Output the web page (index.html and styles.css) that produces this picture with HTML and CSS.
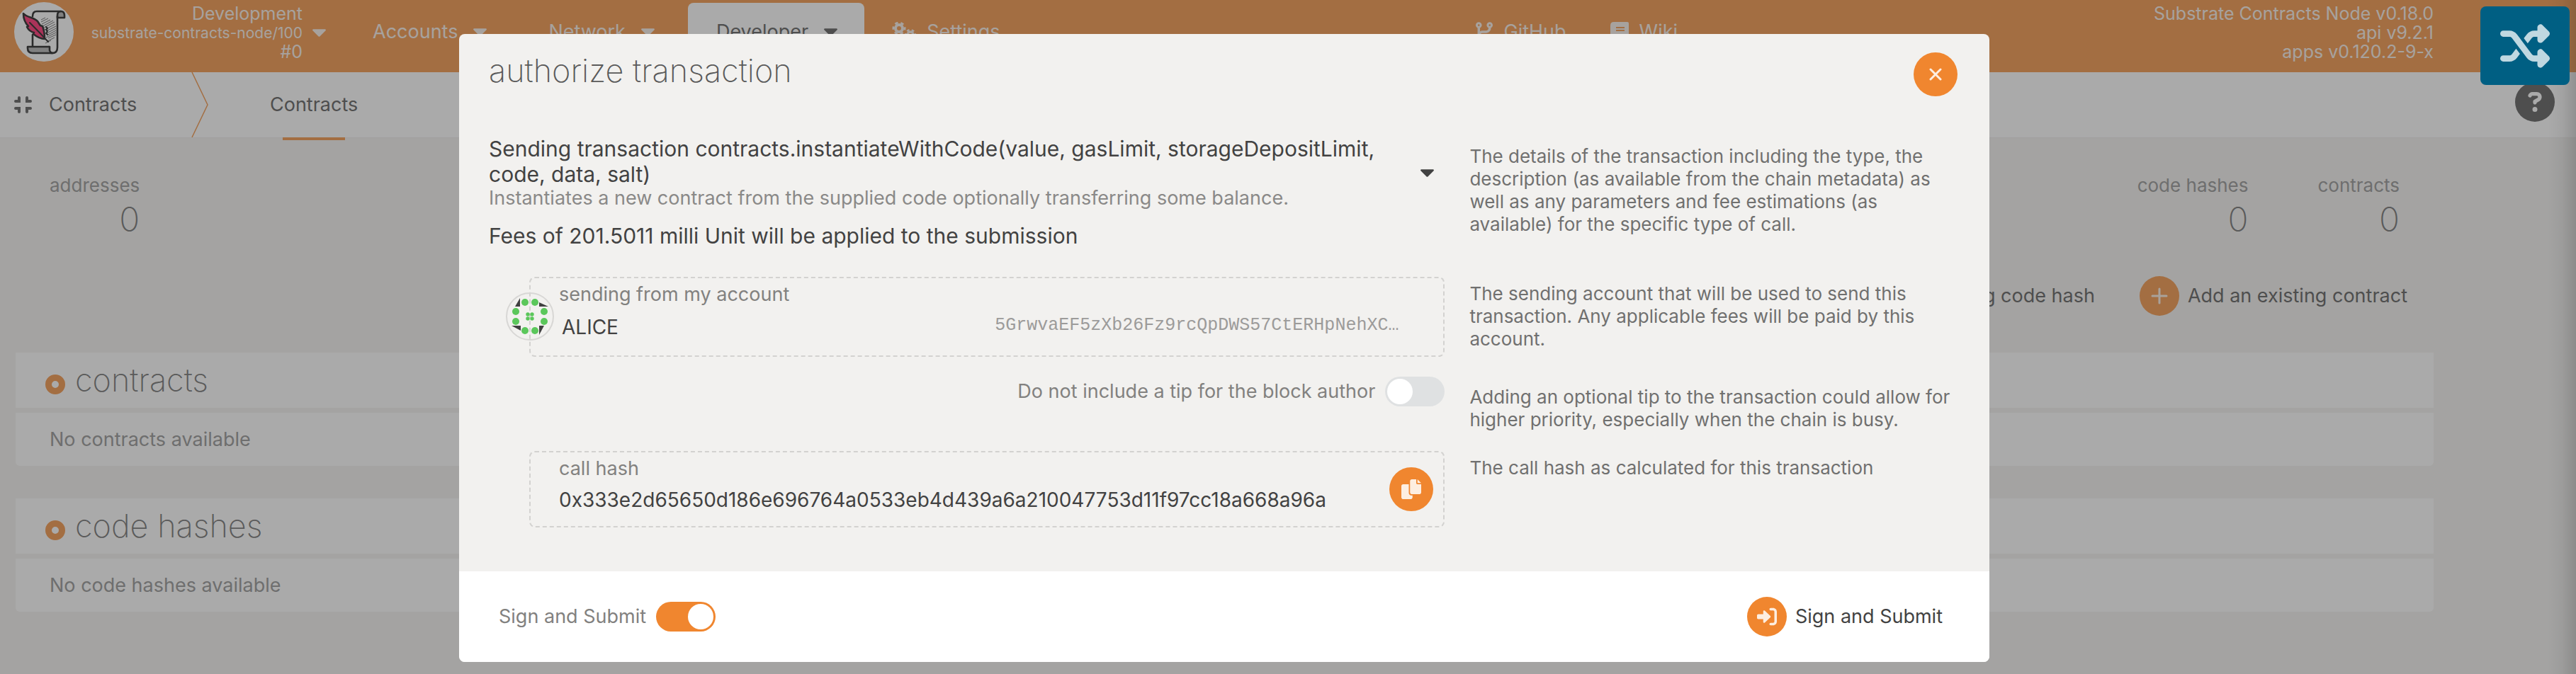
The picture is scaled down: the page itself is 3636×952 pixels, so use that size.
FILE: index.html
```html
<!DOCTYPE html>
<html lang="en">
<head>
<meta charset="utf-8">
<title>Contracts</title>
<meta name="viewport" content="width=device-width, initial-scale=1">
<link rel="stylesheet" href="styles.css">
</head>
<body>
<svg class="sprite" aria-hidden="true">
  <symbol id="caret" viewBox="10 190 300 172"><path d="M31.3 192h257.3c17.8 0 26.7 21.5 14.1 34.1L174.1 354.8c-7.8 7.8-20.5 7.8-28.3 0L17.2 226.1C4.6 213.5 13.5 192 31.3 192z"/></symbol>
  <symbol id="plus" viewBox="0 0 24 24"><path d="M12 2v20M2 12h20" fill="none" stroke="currentColor" stroke-width="3" stroke-linecap="round"/></symbol>
</svg>

<header class="topbar">
  <svg class="logo" viewBox="0 0 84 84" role="img" aria-label="Substrate contracts">
    <circle cx="42" cy="42" r="42" fill="#fff"/>
    <g stroke="#555" stroke-width="1" fill="none">
      <path d="M38 25l6-3M38 28l10-5M39 31l12-6M40 34l15-8M42 36l15-8M43 39l15-8M45 41l14-7M46 44l13-7M46 47l13-7M45 50l14-7M48 51l11-5M47 55l10-5M44 58l8-4"/>
    </g>
    <g stroke="#000" stroke-width="2.6" stroke-linejoin="round" stroke-linecap="round">
      <path d="M61 22v-3q0-6 5-6t5 6v3z" fill="#aaa"/>
      <path d="M26 20q0-7 6-7h34M26 46v16M61 20v44q0 8-7 8t-5-9" fill="none"/>
      <path d="M19 63h31v5q1 4 5 4H26q-7 0-7-7z" fill="#aaa"/>
      <path d="M13 16c5 6 14 5 20 11c2 3 3 5 4 6l3 1c2 5 3 13 3 18c-6 0-11-3-16-7l1-2c-5-1-8-4-10-8l2-1c-5-5-7-11-7-18z" fill="#ff105c"/>
      <path d="M22 29q14 14 26 27M45 35l2 2-2 2 2 2-2 3 2 2" fill="none" stroke-width="2"/>
    </g>
  </svg>
  <button class="chain" type="button">
    <span class="chain-text"><span>Development</span><span class="chain-spec">substrate-contracts-node/100</span><span>#0</span></span>
    <svg class="caret"><use href="#caret"/></svg>
  </button>
  <nav class="menu">
    <button class="menu-item" type="button">Accounts<svg class="caret"><use href="#caret"/></svg></button>
    <button class="menu-item" type="button">Network<svg class="caret"><use href="#caret"/></svg></button>
    <button class="menu-item active" type="button">Developer<svg class="caret"><use href="#caret"/></svg></button>
    <a class="menu-item with-icon" href="#settings">
      <svg class="gears line-icon" viewBox="0 0 34 30" stroke="currentColor"><circle cx="10" cy="10" r="5" stroke-width="4"/><circle cx="10" cy="10" r="8" stroke-width="3" stroke-dasharray="4.4 3.98" stroke-dashoffset="2"/><circle cx="26" cy="19" r="4" stroke-width="3.4"/><circle cx="26" cy="19" r="6.6" stroke-width="3" stroke-dasharray="3.6 3.3" stroke-dashoffset="1.8"/></svg>
      Settings</a>
  </nav>
  <nav class="menu links">
    <a class="menu-item with-icon" href="#github">
      <svg class="branch" viewBox="0 0 448 512"><path fill-rule="evenodd" d="M160 80C160 112.800 140.300 140.100 112 153.300V241.100C130.800 230.200 152.700 224 176 224H272C307.300 224 336 195.300 336 160V153.300C307.700 140.100 288 112.800 288 80C288 35.820 323.800 0 368 0C412.200 0 448 35.820 448 80C448 112.800 428.300 140.100 400 153.300V160C400 230.700 342.700 288 272 288H176C140.700 288 112 316.700 112 352V358.700C140.300 371 160 399.200 160 432C160 476.200 124.200 512 80 512C35.820 512 0 476.200 0 432C0 399.200 19.750 371 48 358.700V153.300C19.750 140.100 0 112.800 0 80C0 35.820 35.820 0 80 0C124.200 0 160 35.820 160 80zM80 104C93.250 104 104 93.250 104 80C104 66.750 93.250 56 80 56C66.750 56 56 66.750 56 80C56 93.250 66.750 104 80 104zM368 56C354.700 56 344 66.750 344 80C344 93.250 354.700 104 368 104C381.300 104 392 93.250 392 80C392 66.750 381.300 56 368 56z"/></svg>
      GitHub</a>
    <a class="menu-item with-icon" href="#wiki">
      <svg class="book" viewBox="0 0 26 28"><path fill-rule="evenodd" d="M5 0H24Q26 0 26 2V19Q26 21 24 21V25Q26 25 26 26.500T24 28H5Q0 28 0 23V5Q0 0 5 0ZM8 7V9H20V7ZM8 11V13H20V11ZM5 21Q3 21 3 23T5 25H21V21Z"/></svg>
      Wiki</a>
  </nav>
  <div class="versions"><span>Substrate Contracts Node v0.18.0</span><span>api v9.2.1</span><span>apps v0.120.2-9-x</span></div>
</header>

<nav class="tabs">
  <div class="tabs-title">
    <svg class="compress line-icon" viewBox="0 0 25 24" stroke="currentColor" stroke-width="4" stroke-linecap="round"><path d="M2 7h5V2M18 2v5h5M2 17h5v5M18 22v-5h5"/></svg>
    Contracts
  </div>
  <svg class="tabs-arrow line-icon" viewBox="0 0 24 92"><path d="M1 0L23 46L1 92" stroke="#f0862f" stroke-width="1.500"/></svg>
  <a class="tab" href="#contracts">Contracts</a>
  <button class="help" type="button" aria-label="Help">
    <svg viewBox="0 0 512 512"><path d="M256 512A256 256 0 1 0 256 0a256 256 0 1 0 0 512zM169.800 165.300c7.900-22.300 29.100-37.300 52.800-37.300h58.300c34.900 0 63.100 28.300 63.100 63.100c0 22.600-12.100 43.500-31.700 54.800L280 264.400c-.2 13-10.900 23.600-24 23.600c-13.300 0-24-10.700-24-24V250.500c0-8.600 4.600-16.500 12.100-20.800l44.300-25.400c4.700-2.700 7.600-7.700 7.600-13.100c0-8.400-6.800-15.100-15.100-15.100H222.600c-3.400 0-6.400 2.100-7.500 5.300l-.4 1.200c-4.400 12.500-18.200 19-30.700 14.600s-19-18.200-14.600-30.700l.4-1.200zM224 352a32 32 0 1 1 64 0 32 32 0 1 1 -64 0z"/></svg>
  </button>
</nav>

<main class="page">
  <dl class="summary">
    <div class="stat"><dt>addresses</dt><dd>0</dd></div>
    <div class="stat push"><dt>code hashes</dt><dd>0</dd></div>
    <div class="stat"><dt>contracts</dt><dd>0</dd></div>
  </dl>
  <div class="actions">
    <button class="action" type="button"><span class="disc"><svg><use href="#plus"/></svg></span>Add an existing code hash</button>
    <button class="action" type="button"><span class="disc"><svg><use href="#plus"/></svg></span>Add an existing contract</button>
  </div>
  <table class="list">
    <thead><tr><th scope="col"><span class="list-title"><span class="ring"></span>contracts</span></th></tr></thead>
    <tbody><tr><td>No contracts available</td></tr></tbody>
  </table>
  <table class="list">
    <thead><tr><th scope="col"><span class="list-title"><span class="ring"></span>code hashes</span></th></tr></thead>
    <tbody><tr><td>No code hashes available</td></tr></tbody>
  </table>
</main>
<div class="edge-shadow"></div>

<div class="overlay">
  <section class="modal" role="dialog" aria-modal="true" aria-labelledby="modal-title">
    <header class="modal-header">
      <h1 id="modal-title">authorize transaction</h1>
      <button class="disc close" type="button" aria-label="Close"><svg viewBox="0 0 18 18"><path d="M2 2l14 14M16 2L2 16" fill="none" stroke="currentColor" stroke-width="3" stroke-linecap="round"/></svg></button>
    </header>
    <div class="modal-body">
      <div class="tx">
        <details class="call">
          <summary><span class="call-name">Sending transaction contracts.instantiateWithCode(value, gasLimit, storageDepositLimit, code, data, salt)<small>Instantiates a new contract from the supplied code optionally transferring some balance.</small></span><svg class="caret"><use href="#caret"/></svg></summary>
        </details>
        <p class="fees">Fees of 201.5011 milli Unit will be applied to the submission</p>
      </div>
      <p class="hint hint-tx">The details of the transaction including the type, the description (as available from the chain metadata) as well as any parameters and fee estimations (as available) for the specific type of call.</p>

      <div class="field account">
        <svg class="identicon" viewBox="0 0 68 68" aria-hidden="true">
          <circle cx="34" cy="34" r="33" fill="none" stroke="#d8d7d5" stroke-width="2"/>
          <g fill="#404040"><path d="M20 8V20H13z"/><path d="M47 14L60 20H47z"/><path d="M8 47H21V54z"/><path d="M47 47H54L47 60z"/></g>
          <g fill="#5bc75b"><circle cx="27" cy="14" r="5"/><circle cx="41" cy="14" r="5"/><circle cx="14" cy="27" r="5"/><circle cx="14" cy="41" r="5"/><circle cx="54" cy="27" r="5"/><circle cx="54" cy="41" r="5"/><circle cx="27" cy="54" r="5"/><circle cx="41" cy="54" r="5"/><circle cx="31" cy="31" r="2.700"/><circle cx="37" cy="31" r="2.700"/><circle cx="31" cy="37" r="2.700"/><circle cx="37" cy="37" r="2.700"/></g>
        </svg>
        <div class="field-main">
          <label for="account">sending from my account</label>
          <div class="account-row">
            <input id="account" type="text" value="ALICE">
            <span class="address">5GrwvaEF5zXb26Fz9rcQpDWS57CtERHpNehXC…</span>
          </div>
        </div>
      </div>
      <p class="hint">The sending account that will be used to send this transaction. Any applicable fees will be paid by this account.</p>

      <label class="switch tip">Do not include a tip for the block author<input type="checkbox"></label>
      <p class="hint hint-tip">Adding an optional tip to the transaction could allow for higher priority, especially when the chain is busy.</p>

      <div class="field">
        <div class="field-main">
          <label for="hash">call hash</label>
          <input id="hash" type="text" readonly value="0x333e2d65650d186e696764a0533eb4d439a6a210047753d11f97cc18a668a96a">
        </div>
        <button class="disc copy" type="button" aria-label="Copy"><svg viewBox="0 0 512 512"><path d="M384 96V0H272c-26.500 0-48 21.500-48 48v288c0 26.500 21.500 48 48 48h192c26.500 0 48-21.500 48-48V128h-96c-17.600 0-32-14.400-32-32zM416 0v96h96L416 0zM192 352V128H48c-26.500 0-48 21.500-48 48v288c0 26.500 21.500 48 48 48h192c26.500 0 48-21.500 48-48v-48h-32c-35.300 0-64-28.700-64-64z"/></svg></button>
      </div>
      <p class="hint">The call hash as calculated for this transaction</p>
    </div>
    <footer class="modal-footer">
      <label class="switch">Sign and Submit<input type="checkbox" checked></label>
      <button class="action" type="button"><span class="disc"><svg class="sign" viewBox="0 0 512 512"><path d="M344.700 238.500l-144.100-136C193.700 96 183.400 94.200 174.600 98C165.800 101.800 160.100 110.400 160.100 120V192H32C14.300 192 0 206.300 0 224v64c0 17.700 14.300 32 32 32h128.100v72c0 9.600 5.700 18.200 14.500 22c8.800 3.800 19 2 26-4.600l144.100-136C354.300 264.400 354.300 247.600 344.700 238.500zM416 32h-64c-17.700 0-32 14.300-32 32s14.300 32 32 32h64c17.700 0 32 14.300 32 32v256c0 17.700-14.300 32-32 32h-64c-17.700 0-32 14.300-32 32s14.300 32 32 32h64c53 0 96-43 96-96V128C512 75 469 32 416 32z"/></svg></span>Sign and Submit</button>
    </footer>
  </section>
</div>
<button class="shuffle" type="button" aria-label="Shuffle">
  <svg viewBox="0 0 512 512"><path d="M403.800 34.400c12-5 25.700-2.200 34.900 6.900l64 64c6 6 9.400 14.100 9.400 22.600s-3.400 16.600-9.400 22.600l-64 64c-9.200 9.200-22.900 11.900-34.900 6.900s-19.800-16.600-19.800-29.600V160H352c-10.100 0-19.600 4.700-25.600 12.800L284 229.300 244 176l31.200-41.600C293.300 110.200 321.800 96 352 96h32V64c0-12.900 7.800-24.600 19.800-29.600zM164 282.700L204 336l-31.200 41.600C154.700 401.800 126.200 416 96 416H32c-17.700 0-32-14.300-32-32s14.300-32 32-32H96c10.100 0 19.600-4.700 25.600-12.800L164 282.700zm274.600 188c-9.200 9.200-22.900 11.900-34.900 6.900s-19.800-16.600-19.800-29.600V416H352c-30.200 0-58.700-14.200-76.800-38.400L121.600 172.800c-6-8.100-15.500-12.800-25.600-12.800H32c-17.700 0-32-14.300-32-32s14.300-32 32-32H96c30.200 0 58.700 14.200 76.800 38.400L326.400 339.200c6 8.100 15.500 12.800 25.600 12.800h32V320c0-12.900 7.800-24.600 19.800-29.600s25.700-2.200 34.900 6.900l64 64c6 6 9.400 14.100 9.400 22.600s-3.400 16.600-9.400 22.600l-64 64z"/></svg>
</button>
</body>
</html>
```

FILE: styles.css
```css
:root {
  --accent: #f0862f;
  --page: #f2f1ef;
  --text: #424242;
  --muted: #82817f;
}

* {
  box-sizing: border-box;
}

body {
  margin: 0;
  min-height: 100vh;
  position: relative;
  background: var(--page);
  color: #464646;
  font: 400 27px/32px Inter, "Liberation Sans", sans-serif;
}

button,
input {
  padding: 0;
  border: 0;
  background: none;
  color: inherit;
  font: inherit;
}

svg {
  display: block;
  flex: none;
  fill: currentColor;
}

a {
  color: inherit;
  text-decoration: none;
}

p,
h1,
dl,
dd {
  margin: 0;
}

.sprite {
  position: absolute;
  width: 0;
  height: 0;
}

.line-icon {
  fill: none;
}

.caret {
  width: 19px;
  height: 11px;
}

/* top bar */
.topbar {
  display: flex;
  height: 102px;
  padding: 0 201px 0 20px;
  background: var(--accent);
  color: #f8efe6;
}

.logo {
  width: 84px;
  height: 84px;
  margin-top: 3px;
}

.chain {
  display: flex;
  align-items: center;
  justify-content: flex-end;
  gap: 14px;
  width: 356px;
  height: 92px;
}

.chain-text,
.versions {
  display: flex;
  flex-direction: column;
  text-align: right;
  font-size: 25px;
  line-height: 27px;
}

.chain-spec {
  font-size: 21px;
}

.menu {
  display: flex;
  gap: 9px;
  margin-left: 26px;
  padding-top: 4px;
}

.links {
  gap: 0;
  margin: 0 auto;
}

.menu-item {
  display: flex;
  align-items: center;
  gap: 22px;
  height: 82px;
  padding: 0 38px 0 40px;
  border-radius: 8px;
}

.with-icon {
  gap: 15px;
  padding: 0 32px 0 30px;
}

.menu-item.active {
  background: #fff;
  color: #464646;
}

.gears {
  width: 34px;
  height: 30px;
}

.branch {
  width: 24px;
  height: 28px;
}

.book {
  width: 26px;
  height: 28px;
}

.versions {
  padding: 6px 0 0 30px;
}

/* tab bar */
.tabs {
  display: flex;
  align-items: stretch;
  height: 93px;
  padding: 0 30px 0 20px;
  background: #fff;
  border-bottom: 1px solid #ecebe9;
}

.tabs-title {
  display: flex;
  align-items: center;
  gap: 24px;
  width: 250px;
}

.compress {
  width: 25px;
  height: 24px;
}

.tabs-arrow {
  width: 24px;
  height: 92px;
}

.tab {
  position: relative;
  display: flex;
  align-items: center;
  padding: 0 20px;
  margin-left: 67px;
}

.tab::after {
  content: "";
  position: absolute;
  left: 50%;
  bottom: -4px;
  width: 88px;
  height: 4px;
  margin-left: -44px;
  background: var(--accent);
}

.help {
  margin-left: auto;
  padding-bottom: 8px;
}

.help svg {
  width: 56px;
  height: 56px;
}

/* page */
.page {
  padding: 51px 201px 40px 22px;
}

.summary {
  display: flex;
  gap: 98px;
  padding: 0 48px;
  color: #868686;
  font-size: 26px;
}

.stat {
  text-align: right;
}

.push {
  margin-left: auto;
}

.stat dd {
  margin-top: 4px;
  color: #5e5e5e;
  font-size: 48px;
  font-weight: 200;
  line-height: 56px;
}

.actions {
  display: flex;
  justify-content: flex-end;
  gap: 63px;
  padding: 52px 37px 45px;
}

.action {
  display: flex;
  align-items: center;
  gap: 12px;
}

.disc {
  display: flex;
  align-items: center;
  justify-content: center;
  flex: none;
  width: 56px;
  height: 56px;
  border-radius: 50%;
  background: var(--accent);
  color: #fdeee1;
}

.disc svg {
  width: 24px;
  height: 24px;
}

.list {
  width: 100%;
  margin-bottom: 32px;
  border-spacing: 0 7px;
}

.list th,
.list td {
  padding: 0 40px 0 48px;
  background: #fff;
  text-align: left;
  font-weight: 400;
}

.list th {
  height: 78px;
  padding-left: 42px;
}

.list td {
  height: 75px;
  border-radius: 0 0 6px 6px;
  color: #868686;
}

.list-title {
  display: flex;
  align-items: center;
  gap: 14px;
  color: #5e5e5e;
  font-size: 45px;
  font-weight: 200;
  line-height: 56px;
}

.ring {
  width: 28px;
  height: 28px;
  margin-top: 12px;
  border: 9px solid var(--accent);
  border-radius: 50%;
}

.edge-shadow {
  position: absolute;
  top: 0;
  right: 0;
  bottom: 0;
  width: 40px;
  background: linear-gradient(to right, rgba(0, 0, 0, 0), rgba(0, 0, 0, 0.06) 50%, rgba(0, 0, 0, 0.2));
}

/* dialog */
.overlay {
  position: absolute;
  inset: 0;
  padding: 48px 180px 16px 0;
  background: rgba(86, 86, 86, 0.5);
}

.modal {
  width: 100%;
  max-width: 2160px;
  margin: 0 auto;
  overflow: hidden;
  border-radius: 8px;
  background: var(--page);
  color: var(--text);
}

.modal-header {
  display: flex;
  align-items: flex-start;
  justify-content: space-between;
  padding: 26px 45px 56px 42px;
}

.modal-header h1 {
  color: #5a5a5a;
  font-size: 45px;
  font-weight: 200;
  line-height: 52px;
}

.disc.close,
.disc.copy {
  width: 62px;
  height: 62px;
}

.close svg {
  width: 18px;
  height: 18px;
}

.modal-body {
  display: grid;
  grid-template-columns: 65% 1fr;
  gap: 28px 35px;
  padding: 0 42px 62px;
}

.tx {
  padding-bottom: 12px;
  font-size: 30px;
  line-height: 36px;
}

.call summary {
  display: flex;
  align-items: center;
  justify-content: space-between;
  padding-right: 15px;
  list-style: none;
}

.call-name {
  max-width: 1290px;
}

.call small {
  display: block;
  color: #8a8988;
  font-size: 27px;
  line-height: 32px;
}

.fees {
  margin-top: 19px;
}

.hint {
  padding-top: 8px;
  color: #70706f;
  font-size: 26px;
}

.hint-tx,
.hint-tip {
  padding-top: 13px;
}

.field {
  position: relative;
  display: flex;
  align-items: center;
  align-self: start;
  height: 108px;
  margin-left: 57px;
  padding: 0 14px 0 40px;
  border: 2px dashed #d3d2d0;
  border-radius: 8px;
}

.field.account {
  height: 113px;
}

.field-main {
  display: flex;
  flex: 1;
  flex-direction: column;
  gap: 12px;
  padding-bottom: 14px;
}

.account .field-main {
  gap: 14px;
  padding-bottom: 18px;
}

.field label {
  color: var(--muted);
}

.field input {
  flex: 1;
  height: 32px;
  font-size: 28px;
}

.account-row {
  display: flex;
  align-items: flex-start;
  padding: 0 49px 0 4px;
}

.address {
  color: #9c9b9a;
  font-family: "Liberation Mono", monospace;
  font-size: 25px;
  line-height: 28px;
}

.identicon {
  position: absolute;
  left: -35px;
  top: 20px;
  width: 68px;
  height: 68px;
}

.copy svg,
.disc .sign {
  width: 28px;
  height: 28px;
}

.switch {
  display: flex;
  align-items: center;
  gap: 14px;
  height: 42px;
  color: var(--muted);
}

.tip {
  justify-content: flex-end;
}

.switch input {
  display: flex;
  align-items: center;
  width: 84px;
  height: 42px;
  margin: 0;
  padding: 3px;
  border-radius: 21px;
  background: #dfe1e2;
  appearance: none;
}

.switch input::before {
  content: "";
  width: 36px;
  height: 36px;
  border-radius: 50%;
  background: #fff;
}

.switch input:checked {
  justify-content: flex-end;
  background: var(--accent);
}

.modal-footer {
  display: flex;
  align-items: center;
  justify-content: space-between;
  padding: 36px 66px 36px 56px;
  background: #fff;
}

.shuffle {
  position: absolute;
  top: 9px;
  right: 9px;
  display: flex;
  align-items: center;
  justify-content: center;
  width: 126px;
  height: 111px;
  border-radius: 8px;
  background: #005f83;
  color: #c0d8e1;
}

.shuffle svg {
  width: 70px;
  height: 70px;
}
```
